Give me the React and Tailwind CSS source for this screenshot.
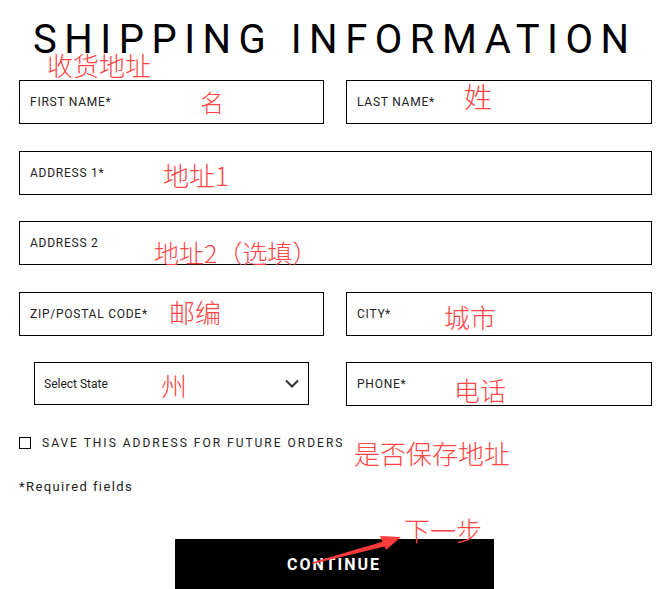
import React from "react";

const cjk = { fontFamily: '"Noto Sans CJK SC", sans-serif' };

function Field({ label, className = "" }) {
  return (
    <div className={`flex h-[44px] items-center border border-black pl-[10px] ${className}`}>
      <span className="text-[12px] tracking-[0.75px] text-[#222]">{label}</span>
    </div>
  );
}

function Note({ children, className }) {
  return (
    <div
      className={`absolute whitespace-nowrap leading-none font-light text-[#ff4545] ${className}`}
      style={cjk}
    >
      {children}
    </div>
  );
}

export default function App() {
  return (
    <div
      className="relative h-[589px] w-[668px] overflow-hidden bg-white"
      style={{ fontFamily: 'Roboto, "Liberation Sans", sans-serif' }}
    >
      <h1 className="ml-[33px] mt-[16px] whitespace-nowrap text-[40px] font-normal leading-[48px] tracking-[7.5px] text-black">
        SHIPPING INFORMATION
      </h1>

      <div className="ml-[19px] mt-[16px] w-[633px]">
        <div className="grid grid-cols-[305px_306px] gap-x-[22px]">
          <Field label="FIRST NAME*" />
          <Field label="LAST NAME*" />
        </div>
        <Field label="ADDRESS 1*" className="mt-[27px]" />
        <Field label="ADDRESS 2" className="mt-[26px]" />
        <div className="mt-[27px] grid grid-cols-[305px_306px] gap-x-[22px]">
          <Field label="ZIP/POSTAL CODE*" />
          <Field label="CITY*" />
        </div>
        <div className="mt-[26px] grid grid-cols-[305px_306px] gap-x-[22px]">
          <div className="pl-[15px] pr-[15px]">
            <div className="flex h-[43px] items-center justify-between border border-black pl-[9px] pr-[9px]">
              <span className="text-[12px] text-[#222]">Select State</span>
              <svg width="14" height="9" viewBox="0 0 14 9" fill="none">
                <polyline points="1,1.5 7,7.5 13,1.5" stroke="#333" strokeWidth="2" />
              </svg>
            </div>
          </div>
          <Field label="PHONE*" />
        </div>

        <div className="mt-[30px] flex items-center gap-[11px]">
          <div className="h-[12px] w-[12px] border-[1.5px] border-black" />
          <span className="text-[12px] leading-[14px] tracking-[2px] text-[#222]">
            SAVE THIS ADDRESS FOR FUTURE ORDERS
          </span>
        </div>

        <p className="mt-[29px] text-[13px] leading-[16px] tracking-[1.4px] text-[#222]">
          *Required fields
        </p>
      </div>

      <div className="mt-[44px] flex justify-center">
        <button className="flex h-[52px] w-[319px] items-center justify-center bg-black text-[16px] font-bold tracking-[2px] text-white">
          CONTINUE
        </button>
      </div>

      <Note className="left-[47px] top-[52px] text-[26px]">收货地址</Note>
      <Note className="left-[200px] top-[90px] text-[24px]">名</Note>
      <Note className="left-[464px] top-[82px] text-[28px]">姓</Note>
      <Note className="left-[163px] top-[162px] text-[26px]">地址1</Note>
      <Note className="left-[154px] top-[240px] text-[25px]">地址2（选填）</Note>
      <Note className="left-[169px] top-[299px] text-[26px]">邮编</Note>
      <Note className="left-[444px] top-[304px] text-[26px]">城市</Note>
      <Note className="left-[161px] top-[372px] text-[26px]">州</Note>
      <Note className="left-[454px] top-[377px] text-[26px]">电话</Note>
      <Note className="left-[354px] top-[440px] text-[26px]">是否保存地址</Note>
      <Note className="left-[404px] top-[517px] text-[26px]">下一步</Note>

      <svg className="absolute left-0 top-0" width="668" height="589" viewBox="0 0 668 589" fill="none">
        <path d="M313 563 L386 541.5 L387.5 545 Z" fill="#ff3b3b" stroke="#ff3b3b" strokeWidth="1.5" strokeLinejoin="round" />
        <polygon points="401,537 380,536 386,550" fill="#ff3b3b" />
      </svg>
    </div>
  );
}
